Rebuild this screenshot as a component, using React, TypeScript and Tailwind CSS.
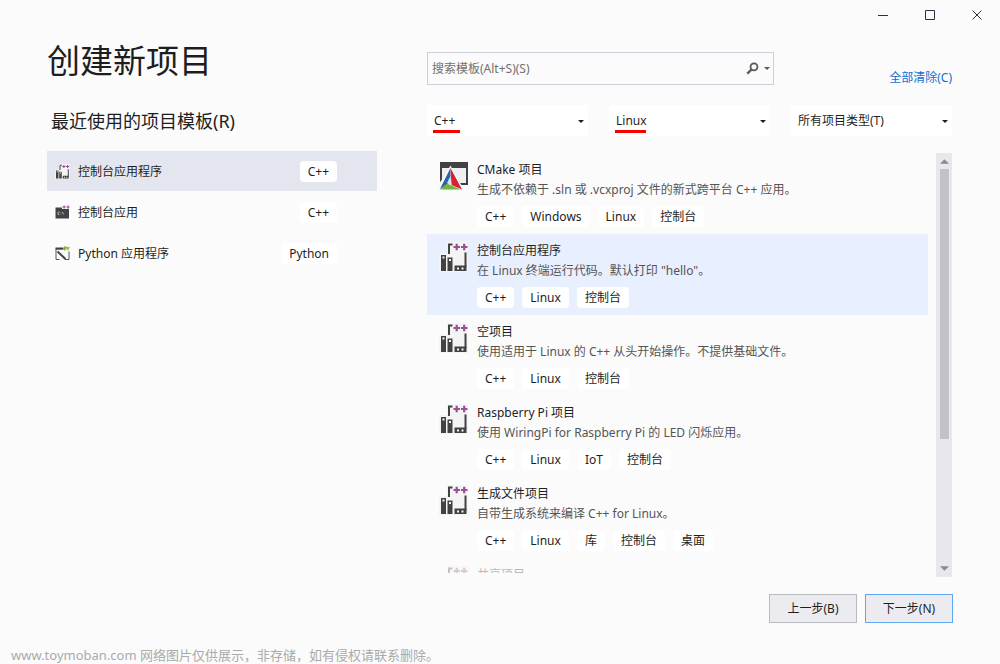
import { useState } from 'react';
import clsx from 'clsx';

type IconKind = 'linux' | 'console' | 'python' | 'cmake';

const recentTemplates: { name: string; tag: string; icon: IconKind }[] = [
  { name: '控制台应用程序', tag: 'C++', icon: 'linux' },
  { name: '控制台应用', tag: 'C++', icon: 'console' },
  { name: 'Python 应用程序', tag: 'Python', icon: 'python' },
];

const templates: { name: string; desc: string; tags: string[]; icon: IconKind; faded?: boolean }[] = [
  {
    name: 'CMake 项目',
    desc: '生成不依赖于 .sln 或 .vcxproj 文件的新式跨平台 C++ 应用。',
    tags: ['C++', 'Windows', 'Linux', '控制台'],
    icon: 'cmake',
  },
  {
    name: '控制台应用程序',
    desc: '在 Linux 终端运行代码。默认打印 "hello"。',
    tags: ['C++', 'Linux', '控制台'],
    icon: 'linux',
  },
  {
    name: '空项目',
    desc: '使用适用于 Linux 的 C++ 从头开始操作。不提供基础文件。',
    tags: ['C++', 'Linux', '控制台'],
    icon: 'linux',
  },
  {
    name: 'Raspberry Pi 项目',
    desc: '使用 WiringPi for Raspberry Pi 的 LED 闪烁应用。',
    tags: ['C++', 'Linux', 'IoT', '控制台'],
    icon: 'linux',
  },
  {
    name: '生成文件项目',
    desc: '自带生成系统来编译 C++ for Linux。',
    tags: ['C++', 'Linux', '库', '控制台', '桌面'],
    icon: 'linux',
  },
  { name: '共享项目', desc: '', tags: [], icon: 'linux', faded: true },
];

const filters = [
  { label: '语言', options: ['C++', 'C#', 'Python'], mark: 'w-[27px]' },
  { label: '平台', options: ['Linux', 'Windows'], mark: 'w-[31px]' },
  { label: '项目类型', options: ['所有项目类型(T)', '控制台', '桌面'], mark: '' },
];

function TemplateIcon({ kind, className }: { kind: IconKind; className: string }) {
  if (kind === 'cmake') {
    return (
      <svg viewBox="0 0 30 30" className={className} aria-hidden="true">
        <path d="M1 1h28v23H1z" fill="#424242" />
        <path d="M3 7h24v15H3z" fill="#efeff1" />
        <path d="M11.500 4.500 0 23v6h25z" fill="#f6f6f6" />
        <path d="M11.500 7 1 28l10.500-7z" fill="#2e5fa8" />
        <path d="M11.500 7 23 28.500 12.500 24z" fill="#d7232e" />
        <path d="m1 28.500 7-6 13.500 6z" fill="#6fb544" />
        <path d="m11.500 15 .9 9-4.400-2z" fill="#dde3ea" />
      </svg>
    );
  }
  if (kind === 'console') {
    return (
      <svg viewBox="0 0 15 15" className={className} aria-hidden="true">
        <path d="M.5 2.500H7V4h7v9.500H.5z" fill="#424242" />
        <path d="M4.500 7H3v2.500h1.500M6 7.200v.6m0 1v.6M7.300 7l1.500 2.500" stroke="#c8c8c8" strokeWidth=".8" fill="none" />
        <path d="M7.500 2h3.200M9.100.4v3.200M11.400 2h3.200M13 .4v3.200" stroke="#9b4f96" strokeWidth="1.200" />
      </svg>
    );
  }
  if (kind === 'python') {
    return (
      <svg viewBox="0 0 15 15" className={className} aria-hidden="true">
        <path d="M1 3v10.500h3.500M14 5.500v8h-4" stroke="#555" fill="none" />
        <path d="M.5 1.500h8v2.200h-8z" fill="#424242" />
        <path d="m2.500 5.500 8 7.500" stroke="#424242" strokeWidth="2" />
        <path d="M9.500 4.500v-3.500H11V3H9.500M12 1l1 2 1.300-2M13 3v1.500" stroke="#86a928" strokeWidth="1.100" fill="none" />
      </svg>
    );
  }
  return (
    <svg viewBox="0 0 30 30" className={className} aria-hidden="true">
      <path d="M8 0h21v30H0V11h8z" fill="#f4f4f4" />
      <path d="M10 12V2.500h3.500M26.500 10.500V25" stroke="#424242" strokeWidth="2" fill="none" />
      <path d="M2 13h5v16H2zM8.500 15.500h5V29h-5zM15.500 23.500H27.500V29H15.500z" fill="#424242" />
      <path d="M3.500 14.500h2v2h-2zM10 17h2v2h-2zM18 25.500h2v2h-2zM22.500 25.500h2v2h-2z" fill="#f4f4f4" />
      <path d="M14.500 5h6.500M17.700 1.800v6.400M22 5h6.500M25.200 1.800v6.400" stroke="#9b4f96" strokeWidth="2.200" />
    </svg>
  );
}

function Tag({ children }: { children: string }) {
  return <span className="h-[21px] rounded bg-white px-2 leading-[21px] whitespace-nowrap">{children}</span>;
}

function WindowControls() {
  return (
    <div className="flex h-8 shrink-0 justify-end pb-px text-[#2d3242]">
      <button aria-label="最小化" className="flex w-[47px] items-center justify-center">
        <svg viewBox="0 0 11 11" className="size-[11px]"><path d="M1 5.500h10" stroke="currentColor" /></svg>
      </button>
      <button aria-label="最大化" className="flex w-[47px] items-center justify-center">
        <svg viewBox="0 0 11 11" className="size-[11px]"><path d="M1.500.5h9v9h-9z" stroke="currentColor" fill="none" /></svg>
      </button>
      <button aria-label="关闭" className="flex w-[47px] items-center justify-center">
        <svg viewBox="0 0 11 11" className="size-[11px]"><path d="m1.500.5 9 9m0-9-9 9" stroke="currentColor" /></svg>
      </button>
    </div>
  );
}

function RecentList() {
  const [active, setActive] = useState(0);

  return (
    <section className="pt-[7px]">
      <h1 className="text-[33px] leading-[44px] text-[#1e1e1e]">创建新项目</h1>
      <h2 className="mt-6 pl-1 text-lg leading-7">最近使用的项目模板(R)</h2>
      <ul className="mt-4 flex flex-col gap-px">
        {recentTemplates.map((item, i) => (
          <li key={item.name}>
            <button
              className={clsx('flex h-10 w-full items-center gap-2 pr-10 pl-2 text-left', i === active && 'bg-[#e3e6ee]')}
              onClick={() => setActive(i)}
            >
              <TemplateIcon kind={item.icon} className="size-[15px] shrink-0" />
              <span className="flex-1 leading-[21px]">{item.name}</span>
              <Tag>{item.tag}</Tag>
            </button>
          </li>
        ))}
      </ul>
    </section>
  );
}

function SearchRow() {
  return (
    <div className="flex items-end">
      <div className="flex h-[33px] w-[66%] items-center border border-[#cccedb] pr-[3px] pl-1">
        <input
          type="search"
          aria-label="搜索模板"
          placeholder="搜索模板(Alt+S)(S)"
          className="min-w-0 flex-1 bg-transparent outline-none placeholder:text-[#717171]"
        />
        <button aria-label="搜索选项" className="flex items-center gap-[5px] text-[#5a5a5e]">
          <svg viewBox="0 0 13 13" className="size-[13px]">
            <circle cx="8" cy="4.800" r="3.500" stroke="currentColor" strokeWidth="1.800" fill="none" />
            <path d="M5.500 7.500 1.300 11.700" stroke="currentColor" strokeWidth="2.400" />
          </svg>
          <svg viewBox="0 0 6 3" className="h-[3px] w-[6px]"><path d="M0 0h6L3 3z" fill="currentColor" /></svg>
        </button>
      </div>
      <a href="#clear" className="ml-auto leading-[14px] text-[#0e70d0]">全部清除(C)</a>
    </div>
  );
}

function Filters() {
  return (
    <div className="mt-5 grid grid-cols-3 gap-[21px]">
      {filters.map((f) => (
        <label key={f.label} className="relative block">
          <select aria-label={f.label} className="h-[31px] w-full appearance-none bg-white px-[7px] outline-none">
            {f.options.map((o) => <option key={o}>{o}</option>)}
          </select>
          <svg viewBox="0 0 6 3" className="pointer-events-none absolute top-[15px] right-1 h-[3px] w-[6px]">
            <path d="M0 0h6L3 3z" fill="#1e1e1e" />
          </svg>
          {f.mark && <span className={clsx('absolute bottom-[3px] left-[6px] h-[3px] bg-[#f80000]', f.mark)} />}
        </label>
      ))}
    </div>
  );
}

function TemplateList() {
  const [active, setActive] = useState(1);

  return (
    <div className="mt-[17px] flex min-h-0 flex-1 gap-2">
      <ul className="mb-1 min-w-0 flex-1 overflow-y-auto [scrollbar-width:none]">
        {templates.map((t, i) => (
          <li key={t.name + i}>
            <button
              className={clsx(
                'flex w-full items-start gap-2 pt-[7px] pb-[7px] pl-3 text-left',
                i === active && 'bg-[#e8efff]',
                t.faded && 'opacity-30',
              )}
              onClick={() => setActive(i)}
            >
              <TemplateIcon kind={t.icon} className="mt-px size-[30px] shrink-0" />
              <span className="flex flex-col">
                <span className="leading-5">{t.name}</span>
                <span className="leading-5 text-[#555]">{t.desc}</span>
                <span className="mt-[6px] flex gap-2">
                  {t.tags.map((tag) => <Tag key={tag}>{tag}</Tag>)}
                </span>
              </span>
            </button>
          </li>
        ))}
      </ul>

      {/* Scroll bar */}
      <div className="flex w-4 shrink-0 flex-col items-center bg-[#e8e8ec] py-[6px]" aria-hidden="true">
        <svg viewBox="0 0 10 5" className="h-[5px] w-[9px] shrink-0"><path d="M0 5h10L5 0z" fill="#868999" /></svg>
        <div className="mt-[5px] w-[9px] flex-1">
          <div className="h-[68%] bg-[#c2c3c9]" />
        </div>
        <svg viewBox="0 0 10 5" className="h-[5px] w-[9px] shrink-0"><path d="M0 0h10L5 5z" fill="#868999" /></svg>
      </div>
    </div>
  );
}

export default function App() {
  return (
    <div className="flex h-screen flex-col bg-[#fbfbfc] font-['Noto_Sans','Noto_Sans_CJK_SC',sans-serif] text-xs text-[#1e1e1e]">
      <WindowControls />
      <main className="grid min-h-0 flex-1 grid-cols-[330px_1fr] gap-[50px] pr-12 pl-[47px]">
        <RecentList />
        <section className="flex min-h-0 flex-col pt-5">
          <SearchRow />
          <Filters />
          <TemplateList />
        </section>
      </main>
      <div className="mt-[17px] flex justify-end gap-2 pr-[47px]">
        <button className="h-[29px] w-[88px] border border-[#b9babf] bg-[#ececf0]">上一步(B)</button>
        <button className="h-[29px] w-[88px] border border-[#5fa8f0] bg-[#ececf0]">下一步(N)</button>
      </div>
      <footer className="mt-6 pb-px pl-[11px] text-[13px] leading-4 text-[#aaa]">
        www.toymoban.com 网络图片仅供展示，非存储，如有侵权请联系删除。
      </footer>
    </div>
  );
}
